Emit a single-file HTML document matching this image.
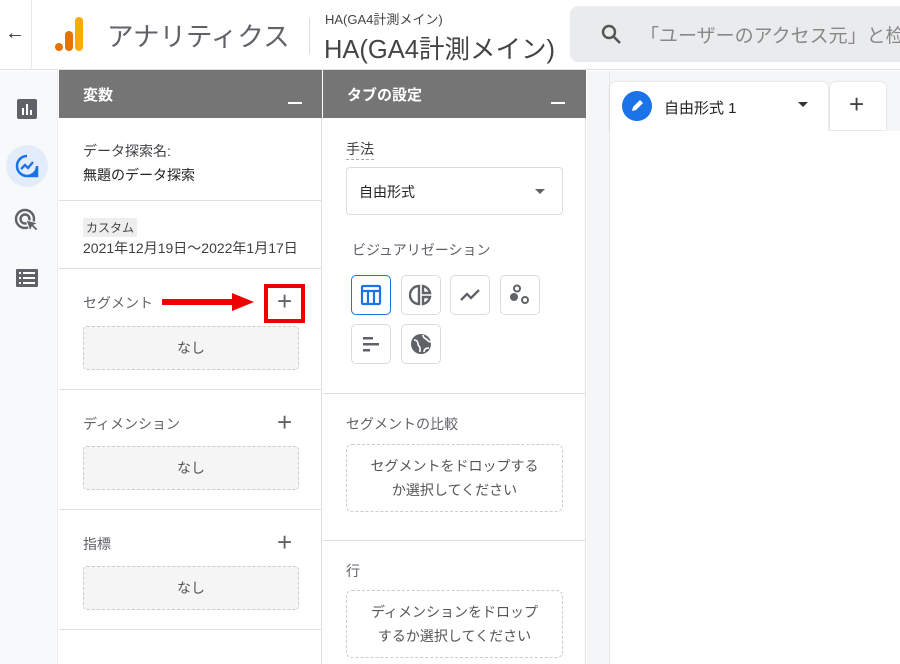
<!DOCTYPE html>
<html><head><meta charset="utf-8"><style>
*{margin:0;padding:0;box-sizing:border-box}
body{width:900px;height:664px;overflow:hidden;background:#fff;font-family:"Liberation Sans","Noto Sans CJK JP",sans-serif;color:#3c4043;position:relative}
.a{position:absolute}
.t{font-size:14px;color:#3c4043;white-space:nowrap}
.g{color:#5f6368}
.hdr{background:#757575;color:#fff;font-weight:bold;font-size:15px;height:48px;top:70px}
.drop{border:1px dashed #ccc;border-radius:4px;background:#f5f5f5;text-align:center;color:#555;font-size:14px}
.drop2{border:1px dashed #ccc;border-radius:6px;background:#fff;text-align:center;color:#555;font-size:14px;line-height:24px;padding-top:9px}
.hl{height:1px;background:#e0e0e0}
.ib{width:40px;height:40px;border:1px solid #dadce0;border-radius:5px;background:#fff;display:flex;align-items:center;justify-content:center}
.plus{font-size:26px;color:#5f6368;font-weight:300}
</style></head><body>
<div class="a" style="left:0;top:0;width:900px;height:70px;border-bottom:1px solid #e0e0e0;background:#fff"></div>
<div class="a" style="left:31px;top:0;width:1px;height:70px;background:#e8e8e8"></div>
<div class="a" style="left:5px;top:22px;font-size:20px;color:#333">←</div>
<svg class="a" style="left:53px;top:16px" width="34" height="36"><rect x="22" y="1" width="8" height="34" rx="4" fill="#f9ab00"/><rect x="12" y="15" width="8" height="20" rx="4" fill="#e37400"/><circle cx="6" cy="31" r="4" fill="#e37400"/></svg>
<div class="a" style="left:107px;top:15px;font-size:26.5px;color:#5f6368">アナリティクス</div>
<div class="a" style="left:309px;top:18px;width:1px;height:36px;background:#dadce0"></div>
<div class="a" style="left:325px;top:9px;font-size:13px;color:#444">HA(GA4計測メイン)</div>
<div class="a" style="left:324px;top:29px;font-size:25.5px;color:#444;white-space:nowrap">HA(GA4計測メイン)</div>
<div class="a" style="left:570px;top:6px;width:340px;height:56px;background:#eaebed;border-radius:8px"></div>
<svg class="a" style="left:601px;top:24px" width="22" height="22"><circle cx="8" cy="8" r="6" fill="none" stroke="#555" stroke-width="2.4"/><path d="M12.5 12.5L19 19" stroke="#555" stroke-width="2.6"/></svg>
<div class="a" style="left:640px;top:21px;font-size:19px;color:#888;white-space:nowrap">「ユーザーのアクセス元」と检</div>
<div class="a" style="left:0;top:71px;width:58px;height:593px;background:#f8f9fa;border-right:1px solid #eee"></div>
<svg class="a" style="left:16px;top:98px" width="22" height="22"><rect x="1" y="1" width="20" height="20" rx="2" fill="#5f6368"/><rect x="6" y="10" width="2" height="7" fill="#fff"/><rect x="10" y="6" width="2" height="11" fill="#fff"/><rect x="14" y="12" width="2" height="5" fill="#fff"/></svg>
<div class="a" style="left:6px;top:145px;width:42px;height:42px;border-radius:50%;background:#e3ecfa"></div>
<svg class="a" style="left:15px;top:154px" width="24" height="24"><path d="M12 2a10 10 0 1 0 10 10V22h-10" fill="none" stroke="#1a73e8" stroke-width="2.5"/><path d="M6 15l4-4 3 3 5-6" fill="none" stroke="#1a73e8" stroke-width="2.3"/><circle cx="20" cy="20" r="2" fill="#1a73e8"/></svg>
<svg class="a" style="left:14px;top:208px" width="26" height="26"><circle cx="11" cy="11" r="9" fill="none" stroke="#5f6368" stroke-width="2.4"/><circle cx="11" cy="11" r="4.5" fill="none" stroke="#5f6368" stroke-width="2.4"/><path d="M12 12l4 11 2-4 4 4 2-2-4-4 4-2z" fill="#5f6368" stroke="#f8f9fa" stroke-width="1"/></svg>
<svg class="a" style="left:16px;top:268px" width="22" height="20"><rect x="0" y="1" width="22" height="18" rx="1" fill="#5f6368"/><g fill="#fff"><rect x="3" y="4" width="2" height="2"/><rect x="3" y="9" width="2" height="2"/><rect x="3" y="14" width="2" height="2"/><rect x="7" y="4" width="12" height="2"/><rect x="7" y="9" width="12" height="2"/><rect x="7" y="14" width="12" height="2"/></g></svg>
<div class="a" style="left:59px;top:71px;width:263px;height:593px;background:#fff;border-right:1px solid #e0e0e0"></div>
<div class="a hdr" style="left:59px;width:263px"><span class="a" style="left:24px;top:14px">変数</span><span class="a" style="left:229px;top:32px;width:14px;height:2px;background:#fff"></span></div>
<div class="a t" style="left:83px;top:141px">データ探索名:</div>
<div class="a t" style="left:83px;top:165px;color:#222">無題のデータ探索</div>
<div class="a hl" style="left:59px;top:200px;width:263px"></div>
<div class="a" style="left:83px;top:218px;background:#eee;font-size:12px;padding:1px 3px;color:#444">カスタム</div>
<div class="a t" style="left:83px;top:238px">2021年12月19日〜2022年1月17日</div>
<div class="a hl" style="left:59px;top:268px;width:263px"></div>
<div class="a t g" style="left:83px;top:293px">セグメント</div>
<svg class="a" style="left:162px;top:291px" width="95" height="22"><rect x="0" y="8" width="72" height="6" fill="#e00"/><path d="M70 2L92 11L70 20z" fill="#e00"/></svg>
<div class="a" style="left:264px;top:284px;width:41px;height:39px;border:4px solid #e00"></div>
<div class="a plus" style="left:277px;top:286px">+</div>
<div class="a drop" style="left:83px;top:326px;width:216px;height:44px;line-height:42px">なし</div>
<div class="a hl" style="left:59px;top:389px;width:263px"></div>
<div class="a t g" style="left:83px;top:414px">ディメンション</div>
<div class="a plus" style="left:277px;top:407px">+</div>
<div class="a drop" style="left:83px;top:446px;width:216px;height:44px;line-height:42px">なし</div>
<div class="a hl" style="left:59px;top:509px;width:263px"></div>
<div class="a t g" style="left:83px;top:534px">指標</div>
<div class="a plus" style="left:277px;top:527px">+</div>
<div class="a drop" style="left:83px;top:566px;width:216px;height:44px;line-height:42px">なし</div>
<div class="a hl" style="left:59px;top:629px;width:263px"></div>
<div class="a" style="left:323px;top:71px;width:263px;height:593px;background:#fff;border-right:1px solid #e0e0e0"></div>
<div class="a hdr" style="left:323px;width:263px"><span class="a" style="left:24px;top:14px">タブの設定</span><span class="a" style="left:228px;top:32px;width:14px;height:2px;background:#fff"></span></div>
<div class="a t" style="left:346px;top:139px;border-bottom:1px dashed #aaa">手法</div>
<div class="a" style="left:346px;top:167px;width:217px;height:48px;border:1px solid #dadce0;border-radius:4px"></div>
<div class="a t" style="left:359px;top:182px;color:#222">自由形式</div>
<div class="a" style="left:535px;top:189px;border:5px solid transparent;border-top-color:#5f6368"></div>
<div class="a t g" style="left:352px;top:240px">ビジュアリゼーション</div>
<div class="a ib" style="left:351px;top:275px;border-color:#1a73e8"><svg width="22" height="22"><rect x="2" y="2" width="18" height="18" rx="1" fill="none" stroke="#1a73e8" stroke-width="2.2"/><path d="M2 7h18M8 7v13M14 7v13" stroke="#1a73e8" stroke-width="2.2"/></svg></div>
<div class="a ib" style="left:401px;top:275px"><svg width="24" height="24"><path d="M10 3a9 9 0 0 0 0 18z" fill="none" stroke="#5f6368" stroke-width="2.4"/><path d="M14 3a9 9 0 0 1 7 7h-7zM14 14h7a9 9 0 0 1-7 7z" fill="none" stroke="#5f6368" stroke-width="2.4"/></svg></div>
<div class="a ib" style="left:450px;top:275px"><svg width="24" height="24"><path d="M3 17l6-6 4 4 8-8" fill="none" stroke="#5f6368" stroke-width="2.3"/></svg></div>
<div class="a ib" style="left:500px;top:275px"><svg width="24" height="24"><circle cx="9" cy="5.5" r="3" fill="none" stroke="#5f6368" stroke-width="2"/><circle cx="6" cy="14" r="4" fill="#5f6368"/><circle cx="17" cy="17" r="3" fill="none" stroke="#5f6368" stroke-width="2"/></svg></div>
<div class="a ib" style="left:351px;top:324px"><svg width="22" height="22"><rect x="3" y="4" width="10" height="2.5" fill="#5f6368"/><rect x="3" y="10" width="16" height="2.5" fill="#5f6368"/><rect x="3" y="16" width="7" height="2.5" fill="#5f6368"/></svg></div>
<div class="a ib" style="left:401px;top:324px"><svg width="24" height="24"><circle cx="12" cy="12" r="10" fill="#5f6368"/><path d="M5 8c3 0 4 2 4 4s2 2 2 4v4M14 3c0 3 2 3 3 4s3 3 5 3M15 20c0-3 2-4 5-4" fill="none" stroke="#fff" stroke-width="1.6"/></svg></div>
<div class="a hl" style="left:323px;top:393px;width:263px"></div>
<div class="a t g" style="left:346px;top:414px">セグメントの比較</div>
<div class="a drop2" style="left:346px;top:444px;width:217px;height:68px">セグメントをドロップする<br>か選択してください</div>
<div class="a hl" style="left:323px;top:540px;width:263px"></div>
<div class="a t g" style="left:346px;top:561px">行</div>
<div class="a drop2" style="left:346px;top:590px;width:217px;height:68px">ディメンションをドロップ<br>するか選択してください</div>
<div class="a" style="left:587px;top:71px;width:23px;height:593px;background:#f5f6f8;border-right:1px solid #e8e8e8"></div>
<div class="a" style="left:610px;top:71px;width:290px;height:60px;background:#f5f6f8"></div>
<div class="a" style="left:610px;top:82px;width:218px;height:49px;background:#fff;border-radius:6px 6px 0 0;box-shadow:0 0 2px rgba(0,0,0,.15)"></div>
<div class="a" style="left:622px;top:91px;width:30px;height:30px;border-radius:50%;background:#1a73e8"></div>
<svg class="a" style="left:629px;top:98px" width="16" height="16"><path d="M3 13l1-4 7-7 3 3-7 7z" fill="#fff"/></svg>
<div class="a t" style="left:664px;top:97px;font-size:15px;color:#222">自由形式 1</div>
<div class="a" style="left:798px;top:102px;border:5px solid transparent;border-top-color:#333"></div>
<div class="a" style="left:830px;top:82px;width:56px;height:48px;background:#fff;border-radius:6px 6px 0 0;box-shadow:0 0 2px rgba(0,0,0,.15)"></div>
<div class="a plus" style="left:849px;top:89px;color:#444">+</div>
<div class="a" style="left:611px;top:131px;width:289px;height:533px;background:#fff"></div>
</body></html>
